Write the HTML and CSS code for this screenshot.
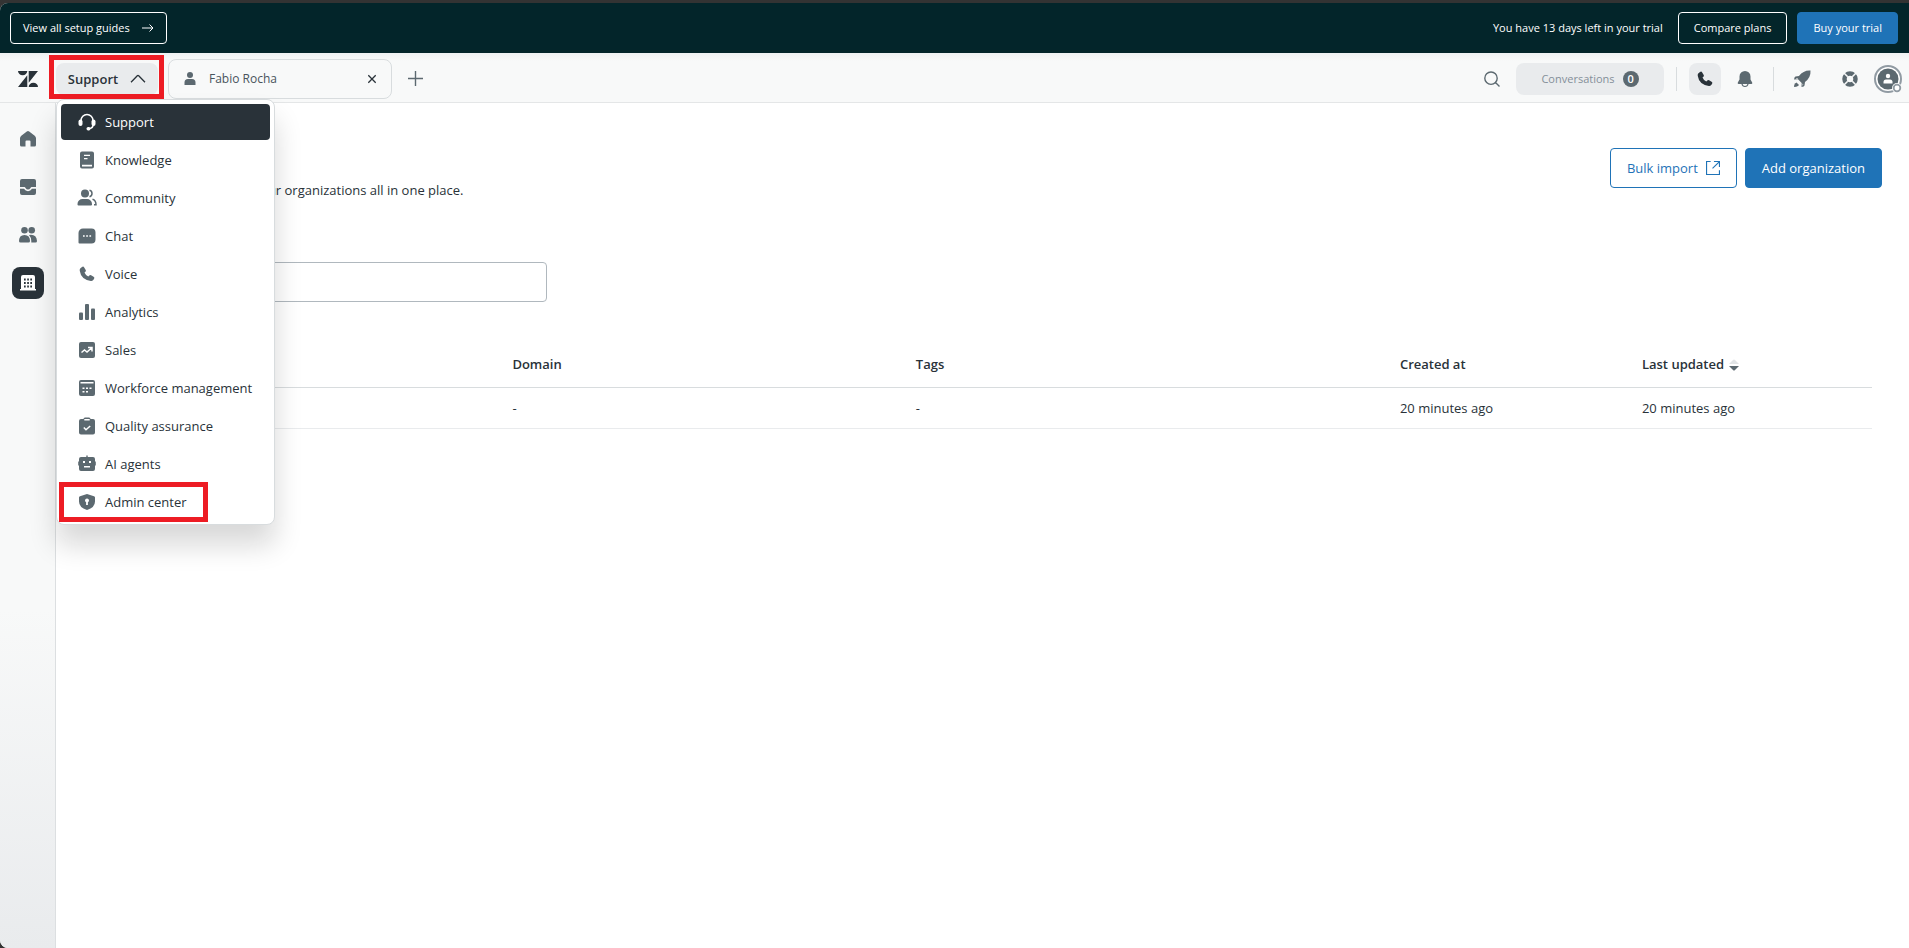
FILE: index.html
```html
<!DOCTYPE html>
<html lang="en">
<head>
    <meta charset="UTF-8">
    <meta name="viewport" content="width=device-width, initial-scale=1.0">
    <title>Organizations</title>
    <link rel="stylesheet" href="styles.css">
</head>
<body>
    <div class="app">
        <div class="trial">
            <button class="trial-btn guides">View all setup guides
                <svg width="12" height="10" viewBox="0 0 12 10" fill="none" stroke="#fff"><path d="M0 5h11M7.500 1.500L11 5 7.500 8.500"/></svg>
            </button>
            <span class="trial-text">You have 13 days left in your trial</span>
            <button class="trial-btn">Compare plans</button>
            <button class="trial-btn buy">Buy your trial</button>
        </div>

        <header class="header">
            <a href="#" class="logo" aria-label="Home">
                <svg width="20" height="16" viewBox="0 0 20 16" fill="#293239"><path d="M0 0h9.300a4.650 4.200 0 0 1-9.300 0zM9.300 4.300V16H0zM10.700 0H20l-9.300 11.700zM10.700 16a4.650 4.200 0 0 1 9.300 0z"/></svg>
            </a>
            <div class="product">
                <button class="product-btn" aria-expanded="true">Support
                    <svg width="16" height="9" viewBox="0 0 16 9" fill="none" stroke="#293239" stroke-width="1.300"><path d="M1 8.300l6.300-6.600a1 1 0 0 1 1.400 0L15 8.300"/></svg>
                </button>
                <div class="product-menu">
                    <button class="menu-item selected">
                        <svg class="icon" viewBox="0 0 16 16"><path d="M2 8V6.500a6 6 0 0 1 12 0V11q0 3-3.500 3.500" fill="none" stroke="currentColor" stroke-width="1.500"/><rect x="-.5" y="5.500" width="4" height="6.500" rx="2"/><rect x="12.500" y="5.500" width="4" height="6.500" rx="2"/><rect x="7.500" y="13" width="4" height="3.500" rx="1.700"/></svg>
                        Support
                    </button>
                    <button class="menu-item">
                        <svg class="icon" viewBox="0 0 16 16"><path fill-rule="evenodd" d="M3-.5h10A2 2 0 0 1 15 1.500v13a2 2 0 0 1-2 2H3a2 2 0 0 1-2-2v-13A2 2 0 0 1 3-.5zM3 12.700v1.800h10v-1.800zM5 2.800v1.300H11V2.800zM5 6v1.300h3.500V6z"/></svg>
                        Knowledge
                    </button>
                    <button class="menu-item">
                        <svg class="icon" viewBox="0 0 16 16"><circle cx="6" cy="3.500" r="4"/><path d="M-1.500 15.500v-1.500a5 5 0 0 1 5-5h4.500a5 5 0 0 1 5 5v.5q0 1-1 1h-12.500q-1 0-1-1z"/><path d="M10.500.3a3.300 3.300 0 0 1 0 6.400M13.500 9.300q3.500 1 3.500 5.500h-2" fill="none" stroke="currentColor" stroke-width="1.500"/></svg>
                        Community
                    </button>
                    <button class="menu-item">
                        <svg class="icon" viewBox="0 0 16 16"><path d="M4 .5h8.500a4 4 0 0 1 4 4v7a4 4 0 0 1-4 4H.5a1 1 0 0 1-1-1V5a4.500 4.500 0 0 1 4.500-4.500z"/><path d="M4 7.200h1.700v1.600H4zM7.200 7.200h1.700v1.600H7.200zM10.400 7.200h1.700v1.600h-1.700z" fill="#fff"/></svg>
                        Chat
                    </button>
                    <button class="menu-item">
                        <svg class="icon" viewBox="0 0 16 16"><path d="M1.200 2.400L3 1a1.500 1.500 0 0 1 2.200.4l1.500 2.500a1.500 1.500 0 0 1-.3 1.900l-.9.8q1 2.700 3.800 3.900l1-1a1.500 1.500 0 0 1 1.800-.2l2.500 1.500a1.500 1.500 0 0 1 .4 2.200l-.8 1a2.500 2.500 0 0 1-2.300 1Q2 13.500.8 5a3 3 0 0 1 .4-2.600z"/></svg>
                        Voice
                    </button>
                    <button class="menu-item">
                        <svg class="icon" viewBox="0 0 16 16"><rect y="8.500" width="4" height="7.500" rx="1"/><rect x="6" y="0" width="4" height="16" rx="1"/><rect x="12" y="4.500" width="4" height="11.500" rx="1"/></svg>
                        Analytics
                    </button>
                    <button class="menu-item">
                        <svg class="icon" viewBox="0 0 16 16"><rect width="16" height="16" rx="2"/><path d="M2.500 10.500l3-2.500 2.500 2 4.500-4M9 5.500h4v4" fill="none" stroke="#fff" stroke-width="1.500"/></svg>
                        Sales
                    </button>
                    <button class="menu-item">
                        <svg class="icon" viewBox="0 0 16 16"><path fill-rule="evenodd" d="M2 0h12a2 2 0 0 1 2 2v12a2 2 0 0 1-2 2H2a2 2 0 0 1-2-2V2a2 2 0 0 1 2-2zM1.500 2v1.500h13V2z"/><path d="M3.500 7.500h2v1.600h-2zM7 7.500h2v1.600H7zM10.500 7.500h2v1.600h-2zM3.500 11h2v1.600h-2zM7 11h2v1.600H7z" fill="#fff"/></svg>
                        Workforce management
                    </button>
                    <button class="menu-item">
                        <svg class="icon" viewBox="0 0 16 16"><path d="M2 1h2.500q0-1.500 1.500-1.500h4q1.500 0 1.500 1.500H14a2 2 0 0 1 2 2v11.500a2 2 0 0 1-2 2H2a2 2 0 0 1-2-2V3a2 2 0 0 1 2-2z"/><path d="M5.300 1h5.400v1.500H5.300z" fill="#fff"/><path d="M4.800 9.500l2.200 2.200L11.200 8" fill="none" stroke="#fff" stroke-width="1.500"/></svg>
                        Quality assurance
                    </button>
                    <button class="menu-item">
                        <svg class="icon" viewBox="0 0 16 16"><path d="M7.300-.5h1.400V1H14a2 2 0 0 1 2 2v2.500h.8v4H16V13a2 2 0 0 1-2 2H2a2 2 0 0 1-2-2V9.500h-.8v-4H0V3a2 2 0 0 1 2-2h5.300z"/><path d="M4 5h2v2H4zM10 5h2v2h-2zM5 10h6v1.500H5z" fill="#fff"/></svg>
                        AI agents
                    </button>
                    <button class="menu-item marked">
                        <svg class="icon" viewBox="0 0 16 16"><path d="M8 0l7 2.200q1 .3 1 1.300v4q0 6-8 8.500Q0 13.500 0 7.500v-4q0-1 1-1.300z"/><path d="M8 4.500a2 2 0 0 1 .9 3.800V11H7.100V8.300A2 2 0 0 1 8 4.500z" fill="#fff"/></svg>
                        Admin center
                    </button>
                </div>
            </div>
            <div class="tab">
                <svg width="12" height="13" viewBox="0 0 12 13" fill="#5c6970"><circle cx="6" cy="3" r="3"/><path d="M.5 13V10.500a3.500 3.500 0 0 1 3.500-3.500h4a3.500 3.500 0 0 1 3.500 3.500V13z"/></svg>
                <span class="tab-name">Fabio Rocha</span>
                <button class="plain-btn" aria-label="Close tab">
                    <svg width="8" height="8" viewBox="0 0 8 8" stroke="#293239" stroke-width="1.300"><path d="M.3.3l7.400 7.400M7.700.3L.3 7.700"/></svg>
                </button>
            </div>
            <button class="plain-btn" aria-label="Add tab">
                <svg width="15" height="15" viewBox="0 0 15 15" stroke="#5c6970" stroke-width="1.400"><path d="M7.500 0v15M0 7.500h15"/></svg>
            </button>

            <div class="tools">
                <button class="icon-btn" aria-label="Search">
                    <svg class="icon" viewBox="0 0 16 16"><path d="M11.500 11.500l4 4M13.200 7.200a6.200 6.200 0 1 1-12.400 0 6.200 6.200 0 0 1 12.400 0z" fill="none" stroke="currentColor" stroke-width="1.400"/></svg>
                </button>
                <button class="conversations">Conversations <span class="count">0</span></button>
                <span class="divider"></span>
                <button class="icon-btn phone" aria-label="Phone">
                    <svg class="icon" viewBox="0 0 16 16"><path d="M1.200 2.400L3 1a1.500 1.500 0 0 1 2.200.4l1.500 2.500a1.500 1.500 0 0 1-.3 1.900l-.9.8q1 2.700 3.800 3.900l1-1a1.500 1.500 0 0 1 1.800-.2l2.500 1.500a1.500 1.500 0 0 1 .4 2.200l-.8 1a2.500 2.500 0 0 1-2.300 1Q2 13.500.8 5a3 3 0 0 1 .4-2.600z"/></svg>
                </button>
                <button class="icon-btn" aria-label="Notifications">
                    <svg class="icon" viewBox="0 0 16 16"><path d="M8 0a5.500 5.500 0 0 1 5.500 5.500v3l1.700 3q.5 1.500-1 1.500H1.800q-1.500 0-1-1.500l1.700-3v-3A5.500 5.500 0 0 1 8 0z"/><path d="M5 13q.5 2.500 3 2.500t3-2.500" fill="none" stroke="currentColor" stroke-width="1.200"/></svg>
                </button>
                <span class="divider"></span>
                <button class="icon-btn" aria-label="Get started">
                    <svg class="icon" viewBox="0 0 16 16"><path d="M16.500-.5q.5 7-5.500 11.500l-.5 3.500q-.2 1-3 1.500l.2-4-3.700-3.700-4 .2q.5-2.800 1.500-3L5 5Q9.500-1 16.500-.5z"/><path d="M2 7.300l2-.1-1 1.300zM9 12.300l.2 1.700-1 .5z" fill="#f8f9f9"/><path d="M2.500 11.500l2.500 2.500-1 1q-1.500 1-4 1 0-2.500 1-3.500z"/></svg>
                </button>
                <button class="icon-btn help" aria-label="Help">
                    <svg class="icon" viewBox="0 0 16 16"><circle cx="8" cy="8" r="5.500" fill="none" stroke="currentColor" stroke-width="4.500"/><path d="M1.700 1.700l4 4M14.300 1.700l-4 4M1.700 14.300l4-4M14.300 14.300l-4-4" stroke="#f8f9f9" stroke-width="1.600"/></svg>
                </button>
                <button class="plain-btn" aria-label="Profile">
                    <svg width="28" height="28" viewBox="0 0 28 28"><circle cx="14" cy="14" r="13" fill="#fff" stroke="#919ba3" stroke-width="2"/><circle cx="14" cy="14" r="10.500" fill="#5c6970"/><circle cx="14" cy="11" r="2.200" fill="#fff"/><path d="M9.500 18.500v-1.500q0-2.500 2.500-2.500h4q2.500 0 2.500 2.500v1.500z" fill="#fff"/><circle cx="23" cy="23" r="5" fill="#f8f9f9"/><circle cx="23" cy="23" r="3.300" fill="#fff" stroke="#919ba3" stroke-width="1.800"/></svg>
                </button>
            </div>
        </header>

        <div class="content">
            <nav class="sidebar">
                <button class="icon-btn" aria-label="Home">
                    <svg class="icon" viewBox="0 0 16 16"><path d="M6.800.5q1.200-1 2.400 0l5.500 4.300q1.300 1 1.300 2.500V14a1.500 1.500 0 0 1-1.500 1.500h-4V10.500a1 1 0 0 0-1-1h-3a1 1 0 0 0-1 1v5h-4A1.500 1.500 0 0 1 0 14V7.300q0-1.500 1.300-2.500z"/></svg>
                </button>
                <button class="icon-btn" aria-label="Views">
                    <svg class="icon" viewBox="0 0 16 16"><path d="M2 0h12a2 2 0 0 1 2 2v6h-4.500q-.5 0-1 1-1 1.500-2.500 1.500T5.500 9q-.5-1-1-1H0V2a2 2 0 0 1 2-2zM0 9.800h4Q5.500 12.200 8 12.200t4-2.400h4V14a2 2 0 0 1-2 2H2a2 2 0 0 1-2-2z"/></svg>
                </button>
                <button class="icon-btn" aria-label="Customers">
                    <svg class="icon wide" viewBox="0 0 18 16"><circle cx="5.500" cy="3.300" r="3.300"/><circle cx="12.700" cy="3.300" r="3.300"/><path d="M0 14q0-6 5.500-6T11 14q0 1.500-1.500 1.500h-8Q0 15.500 0 14z"/><path d="M10 8q7.500-1.200 8 6 0 1.500-1.500 1.500h-4.200V14q0-3.500-2.300-6z"/></svg>
                </button>
                <button class="icon-btn active" aria-label="Organizations">
                    <svg class="icon" viewBox="0 0 16 16"><path fill-rule="evenodd" d="M3 0h10A2 2 0 0 1 15 2v12h1v1.500H0V14h1V2A2 2 0 0 1 3 0zM4 3.500v2h1.700v-2zM7.200 3.500v2h1.700v-2zM10.300 3.500v2H12v-2zM4 7v2h1.700V7zM7.200 7v2h1.700V7zM10.300 7v2H12V7zM4 10.500v2h1.700v-2zM7.200 10.500v2h1.700v-2zM10.300 10.500v2H12v-2z"/></svg>
                </button>
            </nav>

            <main class="main">
                <div class="page-head">
                    <p class="intro">Add, search, and manage your organizations all in one place.</p>
                    <div class="actions">
                        <button class="btn">Bulk import
                            <svg width="14" height="14" viewBox="0 0 15 15" fill="none" stroke="#1f73b7" stroke-width="1.200"><path d="M5 .6H.6v13.800h13.800V10M8.500.6h5.900v5.900M14.400.6L7 8"/></svg>
                        </button>
                        <button class="btn primary">Add organization</button>
                    </div>
                </div>
                <input type="text" class="search" aria-label="Search organizations">
                <table class="orgs">
                    <thead>
                        <tr>
                            <th class="col-name"></th>
                            <th class="col-domain">Domain</th>
                            <th class="col-tags">Tags</th>
                            <th class="col-date">Created at</th>
                            <th class="col-date">Last updated
                                <svg width="10" height="12" viewBox="0 0 10 12"><path d="M0 5l4-4q1-1 2 0l4 4z" fill="#e1e4e6"/><path d="M0 7h10l-4 4q-1 1-2 0z" fill="#5c6970"/></svg>
                            </th>
                        </tr>
                    </thead>
                    <tbody>
                        <tr>
                            <td></td>
                            <td>-</td>
                            <td>-</td>
                            <td>20 minutes ago</td>
                            <td>20 minutes ago</td>
                        </tr>
                    </tbody>
                </table>
            </main>
        </div>
    </div>
</body>
</html>
```
FILE: styles.css
```css
* {
    margin: 0;
    padding: 0;
    box-sizing: border-box;
}

body {
    background: #333;
    padding-top: 3px;
    color: #293239;
    font-family: "Segoe UI", "Open Sans", "Noto Sans", sans-serif;
    font-size: 13px;
    line-height: 20px;
}

button {
    display: flex;
    align-items: center;
    justify-content: center;
    border: none;
    background: none;
    color: inherit;
    font: inherit;
    white-space: nowrap;
    cursor: pointer;
}

svg {
    display: block;
    flex: none;
    overflow: visible;
}

.icon {
    width: 16px;
    height: 16px;
    fill: currentColor;
}

.icon.wide {
    width: 18px;
}

.app {
    display: flex;
    flex-direction: column;
    height: calc(100vh - 3px);
    border-radius: 8px 0 0 8px;
    background: #fff;
    overflow: hidden;
}

/* trial bar */
.trial {
    display: flex;
    align-items: center;
    gap: 10px;
    height: 50px;
    padding: 0 11px 0 10px;
    background: #03252a;
    color: #fff;
    font-size: 11px;
}

.trial-text {
    margin-left: auto;
    margin-right: 5px;
}

.trial-btn {
    height: 32px;
    padding: 0 15px;
    border: 1px solid #fff;
    border-radius: 4px;
}

.trial-btn.guides {
    gap: 12px;
    padding: 0 12px;
}

.trial-btn.buy {
    border-color: #1f73b7;
    background: #1f73b7;
}

/* header */
.header {
    display: flex;
    align-items: center;
    height: 50px;
    padding: 2px 7px 0 18px;
    border-bottom: 1px solid #e4e6e7;
    background: linear-gradient(#eef1f2, #f8f9f9 8px);
}

.product {
    position: relative;
    margin: 0 10px 0 18px;
}

.product-btn {
    gap: 12px;
    width: 102px;
    height: 32px;
    border-radius: 8px;
    background: #e9ebed;
    font-weight: 600;
}

.product::after,
.marked::after {
    content: "";
    position: absolute;
    border: 5px solid #ed1c24;
}

.product::after {
    inset: -8px -6px -4px -7px;
}

.product-menu {
    position: absolute;
    z-index: 1;
    top: 36px;
    left: 0;
    display: flex;
    flex-direction: column;
    gap: 2px;
    width: 219px;
    padding: 4px;
    border: 1px solid #d8dcde;
    border-radius: 8px;
    background: #fff;
    box-shadow: 0 20px 28px rgba(10, 13, 14, 0.16);
}

.menu-item {
    position: relative;
    justify-content: flex-start;
    gap: 10px;
    height: 36px;
    padding-left: 18px;
    border-radius: 4px;
}

.menu-item .icon {
    color: #5c6970;
}

.menu-item.selected,
.menu-item.selected .icon {
    background: #293239;
    color: #fff;
}

.marked::after {
    inset: -2px 62px -2px -2px;
}

.tab {
    display: flex;
    align-items: center;
    width: 224px;
    height: 40px;
    margin-right: 16px;
    padding: 0 15px;
    border: 1px solid #d8dcde;
    border-radius: 8px;
    color: #49545c;
    font-size: 12px;
}

.tab-name {
    flex: 1;
    margin-left: 13px;
}

.tools {
    display: flex;
    align-items: center;
    gap: 8px;
    margin-left: auto;
}

.icon-btn {
    width: 32px;
    height: 32px;
    border-radius: 8px;
    color: #5c6970;
}

.phone {
    background: #e9ebed;
    color: #293239;
}

.help {
    margin-left: 8px;
}

.conversations {
    gap: 8px;
    width: 148px;
    height: 32px;
    border-radius: 8px;
    background: #e9ebed;
    color: #848f99;
    font-size: 11px;
}

.count {
    width: 16px;
    height: 16px;
    border-radius: 8px;
    background: #5c6970;
    color: #fff;
    font-weight: 600;
    line-height: 16px;
}

.divider {
    width: 1px;
    height: 24px;
    margin: 0 4px;
    background: #d8dcde;
}

/* page */
.content {
    display: flex;
    flex: 1;
}

.sidebar {
    display: flex;
    flex-direction: column;
    align-items: center;
    gap: 16px;
    width: 56px;
    padding-top: 20px;
    border-right: 1px solid #dcdfe1;
    background: linear-gradient(#f8f9f9 60%, #e9ebed);
}

.active {
    background: #293239;
    color: #fff;
}

.main {
    flex: 1;
    padding: 45px 37px 0 41px;
}

.page-head {
    display: flex;
    justify-content: space-between;
    margin-right: -10px;
}

.intro {
    padding-top: 32px;
}

.actions {
    display: flex;
    gap: 8px;
}

.btn {
    gap: 8px;
    height: 40px;
    padding: 0 16px;
    border: 1px solid #1f73b7;
    border-radius: 4px;
    color: #1f73b7;
}

.btn.primary {
    background: #1f73b7;
    color: #fff;
}

.search {
    display: block;
    width: 450px;
    height: 40px;
    margin-top: 62px;
    padding: 0 12px;
    border: 1px solid #b0b8be;
    border-radius: 4px;
    font: inherit;
}

.orgs {
    width: 100%;
    margin-top: 39px;
    border-collapse: collapse;
    table-layout: fixed;
    text-align: left;
}

.col-name,
.col-domain {
    width: calc(100% * 5 / 22);
}

.col-tags {
    width: calc(100% * 6 / 22);
}

.col-date {
    width: calc(100% * 3 / 22);
}

th {
    height: 46px;
    padding: 0 12px;
    border-bottom: 1px solid #d8dcde;
    font-weight: 600;
}

th svg {
    display: inline-block;
    margin-left: 2px;
    vertical-align: middle;
}

td {
    height: 41px;
    padding: 0 12px;
    border-bottom: 1px solid #e9ebed;
}
```
